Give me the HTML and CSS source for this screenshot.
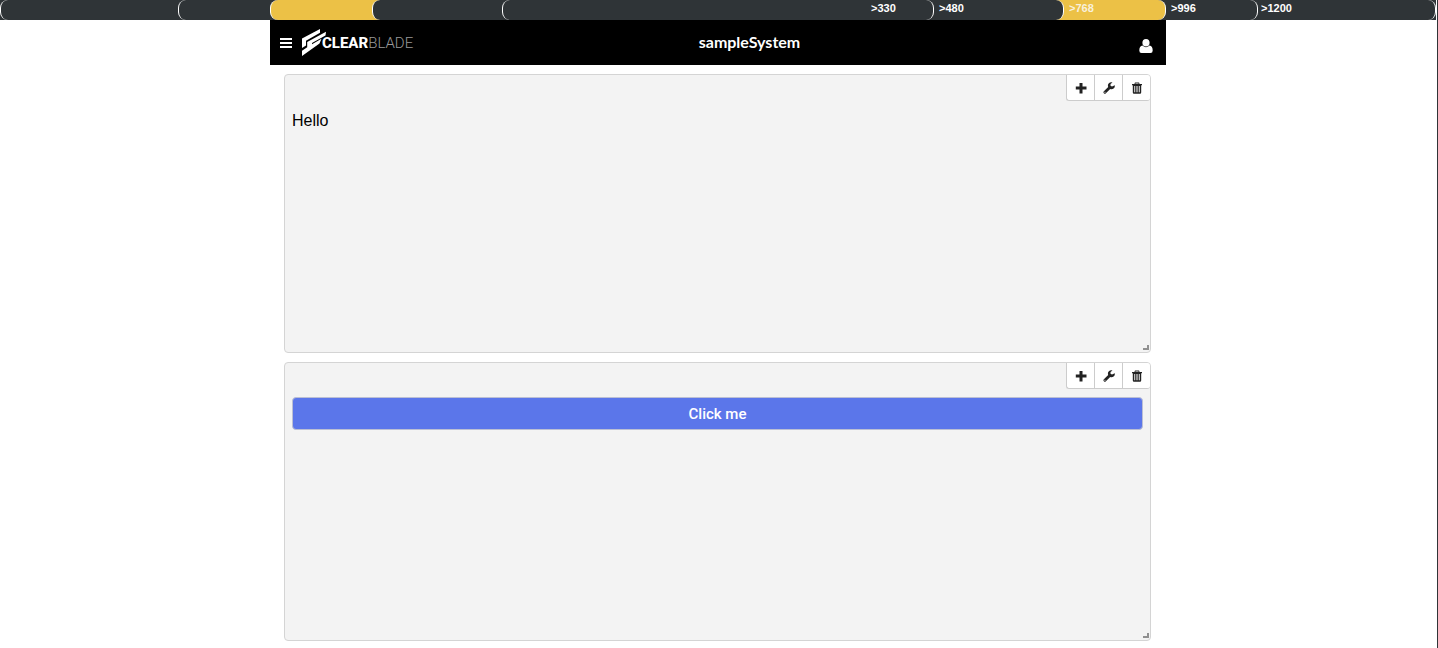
FILE: index.html
```
<!DOCTYPE html>
<html lang="en">
<head>
    <meta charset="UTF-8">
    <meta name="viewport" content="width=device-width, initial-scale=1.0">
    <title>sampleSystem</title>
    <link rel="stylesheet" href="styles.css">
</head>
<body>
    <!-- shared icons -->
    <svg class="sprite" aria-hidden="true">
        <symbol id="plus" viewBox="0 0 12 12">
            <path d="M4.500 1h3v3.500H11.500v3H7.500V11.500h-3V7.500H.8v-3h3.700z"/>
        </symbol>
        <symbol id="wrench" viewBox="0 0 12 12">
            <path d="M11.800 3.300A3.400 3.400 0 0 1 7.200 7L2.900 11.300a1.400 1.400 0 0 1-2-2L5.200 5A3.400 3.400 0 0 1 9.500.5L7.500 1.900V3.700L9 4.600zM1.900 9.700a.5.5 0 1 0 .1 0z"/>
        </symbol>
        <symbol id="trash" viewBox="0 0 12 12">
            <path fill-rule="evenodd" d="M4 .5h4L8.600 2H11v1.200h-.8V10.500Q10.200 11.700 9 11.700H3Q1.800 11.700 1.800 10.500V3.200H1V2h2.400zM4.600 1.400 4.300 2h3.400l-.3-.6zM3.300 4v6.300h.9V4zM5.500 4v6.300h1V4zM7.800 4v6.300h.9V4z"/>
        </symbol>
    </svg>

    <div class="breakpoints">
        <button class="breakpoint bp-1200"><span>&gt;1200</span></button>
        <button class="breakpoint bp-996"><span>&gt;996</span></button>
        <button class="breakpoint bp-768 active"><span>&gt;768</span></button>
        <button class="breakpoint bp-480"><span>&gt;480</span></button>
        <button class="breakpoint bp-330"><span>&gt;330</span></button>
    </div>

    <div class="preview">
        <header class="navbar">
            <div class="brand">
                <button class="icon-button" aria-label="Menu">
                    <svg width="12" height="10" viewBox="0 0 12 10"><path d="M0 0h12v2H0zM0 4h12v2H0zM0 8h12v2H0z"/></svg>
                </button>
                <a class="logo" href="#">
                    <svg width="24" height="27" viewBox="0 0 24 27">
                        <path d="M0 9.500 18 0V3.800L4 11.800V16.500L0 19z"/>
                        <path d="M24 2.800 23.500 6.500 10 14V15.300L19.500 9.800 17.500 14.500 0 27V21.800L5.200 18.200V13z"/>
                    </svg>
                    <span class="logo-text"><b>CLEAR</b>BLADE</span>
                </a>
            </div>
            <h1 class="title">sampleSystem</h1>
            <button class="icon-button user" aria-label="User">
                <svg width="14" height="14" viewBox="0 0 14 14"><path d="M7 0a3.600 3.800 0 0 1 0 7.600A3.600 3.800 0 0 1 7 0zM3.500 6.500Q7 9.800 10.500 6.500 13.700 7 13.700 11.500 13.700 14 11.500 14H2.500Q.3 14 .3 11.500.3 7 3.500 6.500z"/></svg>
            </button>
        </header>

        <main class="widgets">
            <section class="widget">
                <div class="tools">
                    <button aria-label="Add"><svg><use href="#plus"/></svg></button>
                    <button aria-label="Settings"><svg><use href="#wrench"/></svg></button>
                    <button aria-label="Delete"><svg><use href="#trash"/></svg></button>
                </div>
                <p class="text">Hello</p>
                <span class="resize"></span>
            </section>

            <section class="widget">
                <div class="tools">
                    <button aria-label="Add"><svg><use href="#plus"/></svg></button>
                    <button aria-label="Settings"><svg><use href="#wrench"/></svg></button>
                    <button aria-label="Delete"><svg><use href="#trash"/></svg></button>
                </div>
                <button class="click-button">Click me</button>
                <span class="resize"></span>
            </section>
        </main>
    </div>
</body>
</html>
```
FILE: styles.css
```
* {
    box-sizing: border-box;
}

body {
    margin: 0;
    min-height: 100vh;
    padding-right: 1px;
    border-right: 1px solid #2f3437;
    background: #fff;
    font-family: "Liberation Sans", Arial, sans-serif;
}

button {
    padding: 0;
    border: none;
    cursor: pointer;
}

.sprite {
    display: none;
}

/* breakpoint bar, narrower buttons stacked over the wider ones */
.breakpoints {
    display: grid;
    justify-items: center;
    height: 20px;
    background: #2f3437;
}

.breakpoint {
    grid-area: 1 / 1;
    display: flex;
    justify-content: flex-end;
    width: 100%;
    height: 20px;
    padding-top: 2px;
    border: solid #fff;
    border-width: 0 1px;
    border-radius: 8px;
    background: #2f3437;
    color: #fff;
    font: bold 11px/13px "Liberation Sans", Arial, sans-serif;
    text-align: left;
}

.breakpoint.active {
    background: #ecc146;
    color: #f8f0dc;
}

.bp-1200 span {
    width: 174px;
}

.bp-996 {
    max-width: 1080px;
}

.bp-996 span {
    width: 86px;
}

.bp-768 {
    max-width: 896px;
}

.bp-768 span {
    width: 96px;
}

.bp-480 {
    max-width: 692px;
}

.bp-480 span {
    width: 124px;
}

.bp-330 {
    max-width: 432px;
}

.bp-330 span {
    width: 62px;
}

.preview {
    max-width: 896px;
    margin: 0 auto;
}

.navbar {
    display: grid;
    grid-template-columns: 1fr auto 1fr;
    align-items: center;
    height: 45px;
    padding: 0 13px 0 10px;
    background: #000;
}

.brand,
.logo {
    display: flex;
    align-items: center;
    gap: 10px;
}

.logo {
    gap: 0;
    color: #fff;
    text-decoration: none;
}

.logo svg,
.icon-button svg {
    display: block;
    fill: #fff;
}

.logo svg {
    margin-right: -4px;
}

.logo-text {
    color: #999;
    font: 300 15px/20px Roboto, sans-serif;
}

.logo-text b {
    color: #fff;
    font-weight: 800;
}

.icon-button {
    background: none;
}

.user {
    justify-self: end;
    padding-top: 6px;
}

.title {
    margin: 0;
    padding: 0 0 2px 66px;
    color: #fff;
    font: bold 16px/20px Lato, sans-serif;
}

.widgets {
    display: flex;
    flex-direction: column;
    gap: 9px;
    padding: 9px 15px 7px 14px;
}

.widget {
    position: relative;
    min-height: 279px;
    padding: 0 7px;
    border: 1px solid #d4d4d4;
    border-radius: 4px;
    background: #f3f3f3;
}

.tools {
    display: flex;
    justify-content: flex-end;
    margin-right: -7px;
}

.tools button {
    display: grid;
    place-items: center;
    width: 28px;
    height: 26px;
    border: solid #ccc;
    border-width: 0 0 1px 1px;
    background: #fff;
}

.tools button:first-child {
    border-bottom-left-radius: 3px;
}

.tools button:last-child {
    border-radius: 0 3px 3px 0;
}

.tools svg {
    width: 12px;
    height: 12px;
    fill: #222;
}

.text {
    margin: 10px 0 0;
    font-size: 16px;
    line-height: 20px;
}

.click-button {
    width: 100%;
    height: 33px;
    margin-top: 8px;
    border: 1px solid #bbbfd4;
    border-radius: 4px;
    background: #5b76ea;
    color: #fff;
    font: 500 15px/20px Roboto, sans-serif;
}

/* drag handle in the widget corner */
.resize {
    position: absolute;
    right: 1px;
    bottom: 2px;
    width: 6px;
    height: 5px;
    border: solid #909090;
    border-width: 0 2px 2px 0;
    cursor: se-resize;
}
```
